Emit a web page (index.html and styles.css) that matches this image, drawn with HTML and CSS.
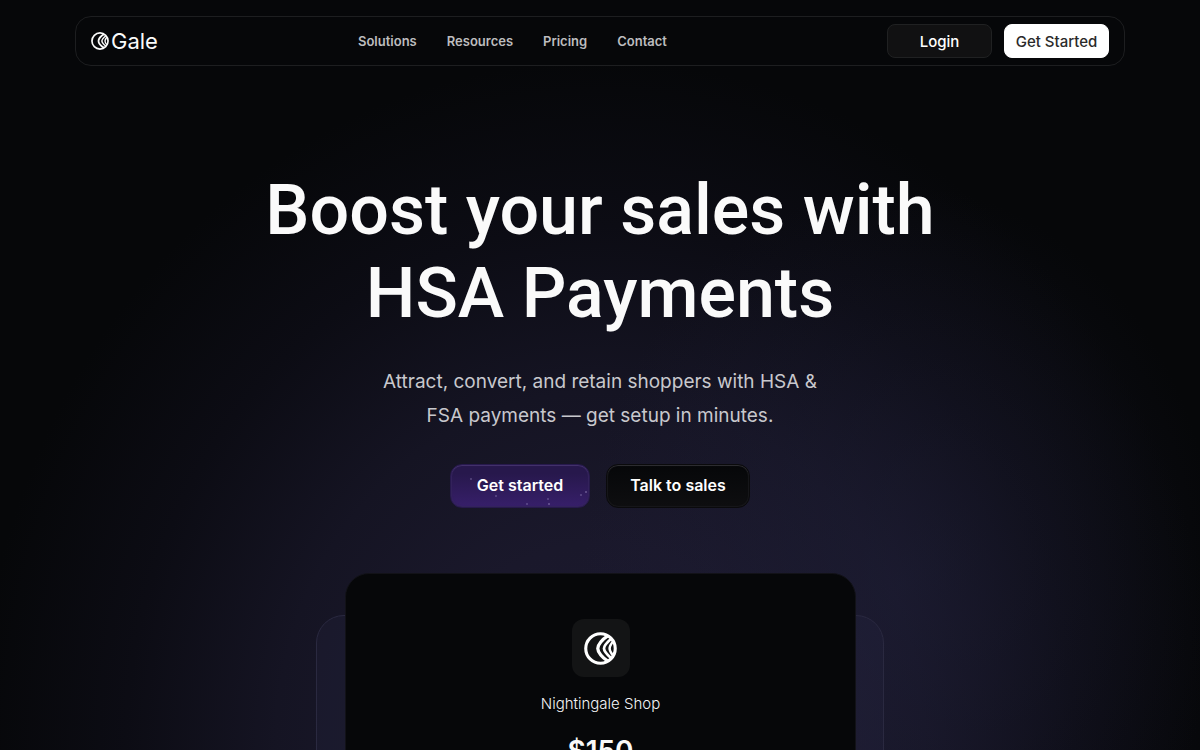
FILE: index.html
```html
<!DOCTYPE html>
<html lang="en">
<head>
<meta charset="utf-8">
<title>Gale</title>
<link rel="stylesheet" href="styles.css">
</head>
<body>
<svg class="defs" aria-hidden="true">
  <symbol id="mark" viewBox="0 0 34 34">
    <circle cx="17" cy="17" r="15.2" fill="none" stroke="currentColor" stroke-width="3.200"/>
    <path d="M24.500 4 C19 7.500 14.200 13 14.200 17 C14.200 21 19 26.500 24.500 30" fill="none" stroke="currentColor" stroke-width="3.400"/>
    <path d="M28 7 C24 10.500 20.600 14 20.600 17 C20.600 20 24 23.500 28 27" fill="none" stroke="currentColor" stroke-width="2.800"/>
    <path d="M30.500 9 C28 12 26.400 14.500 26.400 17 C26.400 19.500 28 22 30.500 25" fill="none" stroke="currentColor" stroke-width="2.600"/>
  </symbol>
</svg>
<div class="page">
  <header class="bar">
    <a class="logo" href="#"><svg class="logo-mark" aria-hidden="true"><use href="#mark"/></svg><span>Gale</span></a>
    <nav class="menu">
      <a href="#">Solutions</a>
      <a href="#">Resources</a>
      <a href="#">Pricing</a>
      <a href="#">Contact</a>
    </nav>
    <div class="account">
      <button class="btn btn-login" type="button">Login</button>
      <button class="btn btn-start" type="button">Get Started</button>
    </div>
  </header>
  <main class="hero">
    <h1>Boost your sales with<br>HSA Payments</h1>
    <p class="lead">Attract, convert, and retain shoppers with HSA &amp;<br>FSA payments — get setup in minutes.</p>
    <div class="actions">
      <button class="cta cta-purple" type="button">Get started</button>
      <button class="cta cta-dark" type="button">Talk to sales</button>
    </div>
    <section class="stack">
      <div class="card-back"></div>
      <div class="card">
        <div class="shop-icon"><svg class="shop-mark" aria-hidden="true"><use href="#mark"/></svg></div>
        <div class="shop-name">Nightingale Shop</div>
        <div class="price">$150</div>
      </div>
    </section>
  </main>
</div>
</body>
</html>
```
FILE: styles.css
```css
* { box-sizing: border-box; }
body { margin: 0; background: #060709; color: #fafafa; font-family: Inter, sans-serif; }
a { color: inherit; text-decoration: none; }
button { font-family: inherit; cursor: pointer; }
.defs { display: none; }
.page {
  height: 100vh;
  overflow: hidden;
  padding: 16px 24px 0;
  background:
    radial-gradient(ellipse 320px 400px at 75% 78%, rgba(34, 34, 62, .45), rgba(34, 34, 62, 0)),
    radial-gradient(ellipse 52% 92% at 50% 100%, #1c1a32 0%, #1a182b 30%, #151423 52%, #0c0c14 76%, #060709 100%);
}
.bar {
  display: flex;
  align-items: center;
  justify-content: space-between;
  max-width: 1050px;
  height: 50px;
  margin: 0 auto;
  padding: 0 15px;
  border: 1px solid #1d1e20;
  border-radius: 16px;
  background: #060709;
}
.logo { display: flex; align-items: center; gap: 2px; font-size: 22px; line-height: 28px; }
.logo-mark { width: 18px; height: 18px; }
.menu { display: flex; gap: 30px; padding-right: 20px; font-size: 13px; font-weight: 600; color: #bdbdbf; }
.account { display: flex; gap: 12px; }
.btn { width: 105px; height: 34px; padding: 0; border: 1px solid #202122; border-radius: 8px; font-weight: 500; font-size: 15px; }
.btn-login { background: #111112; color: #fff; }
.btn-start { background: #fff; border-color: #fff; color: #2a2a2a; }
.hero { display: flex; flex-direction: column; align-items: center; padding-top: 103px; text-align: center; }
h1 { margin: 0; font-family: Roboto, sans-serif; font-size: 70px; font-weight: 500; line-height: 83px; }
.lead { margin: 30px 0 0; font-size: 19px; font-weight: 400; line-height: 34px; color: #c8c8cd; }
.actions { display: flex; gap: 16px; margin-top: 31px; }
.cta {
  height: 44px;
  padding: 0 0 2px;
  border: 1px solid #0a0a0c;
  border-radius: 12px;
  color: #fff;
  font-size: 16px;
  font-weight: 600;
  white-space: nowrap;
}
.cta-purple {
  width: 140px;
  border-color: #27194d;
  background:
    radial-gradient(circle at 20px 14px, #a294c8 0, transparent 1px),
    radial-gradient(circle at 45px 31px, #a294c8 0, transparent 1px),
    radial-gradient(circle at 76px 39px, #a294c8 0, transparent 1px),
    radial-gradient(circle at 97px 34px, #a294c8 0, transparent 1px),
    radial-gradient(circle at 98px 39px, #c4b8e4 0, transparent 1px),
    radial-gradient(circle at 130px 30px, #a294c8 0, transparent 1px),
    radial-gradient(circle at 135px 27px, #c4b8e4 0, transparent 1px),
    linear-gradient(#27184c 20%, #371f6a);
  box-shadow: inset 0 1px 0 0 #42316a, inset 0 0 1px 1px #35245c;
}
.cta-dark { width: 144px; background: linear-gradient(#060709, #0e0e10); box-shadow: inset 0 1px 0 0 #2c2c30, inset 0 0 1px 1px #18181b; }
.stack { display: grid; width: 100%; max-width: 568px; margin-top: 65px; }
.card, .card-back { grid-area: 1 / 1; height: 420px; }
.card-back { margin-top: 42px; border: 1px solid #2a2940; border-radius: 28px; background: rgba(46, 46, 78, .18); }
.card {
  display: flex;
  flex-direction: column;
  align-items: center;
  margin: 0 28px 0 29px;
  padding-top: 45px;
  border: 1px solid #121218;
  border-radius: 24px;
  background: #060709;
  z-index: 1;
}
.shop-icon { display: grid; place-items: center; width: 58px; height: 58px; border-radius: 12px; background: #131415; color: #fff; }
.shop-mark { width: 33px; height: 33px; }
.shop-name { margin-top: 16px; font-size: 15px; font-weight: 300; line-height: 22px; color: #f4f4f6; }
.price { margin-top: 18px; font-size: 28px; font-weight: 600; line-height: 36px; }
```
